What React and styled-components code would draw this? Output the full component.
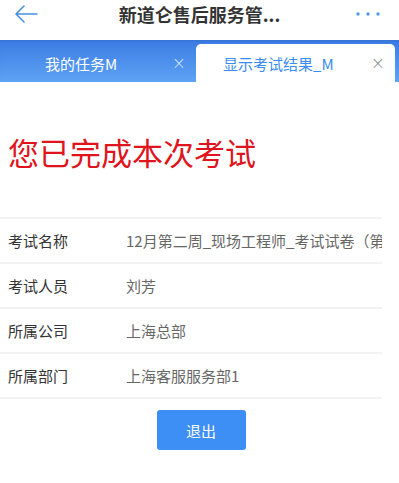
import React from "react";
import styled, { createGlobalStyle } from "styled-components";

const Global = createGlobalStyle`
  html, body { margin: 0; padding: 0; background: #fff; }
  body { font-family: "Noto Sans CJK SC", "Noto Sans", sans-serif; }
  * { box-sizing: border-box; }
`;

const Page = styled.div`
  width: 399px;
  height: 483px;
  overflow: hidden;
  background: #fff;
`;

const Header = styled.div`
  height: 40px;
  display: flex;
  align-items: center;
  justify-content: space-between;
  padding: 0 18px 0 14px;
  position: relative;
`;

const Title = styled.div`
  position: absolute;
  left: 0;
  right: 0;
  top: 0;
  line-height: 28px;
  text-align: center;
  font-size: 18px;
  font-weight: 700;
  color: #333;
  pointer-events: none;
`;

const IconBtn = styled.div`
  display: flex;
  align-items: center;
  height: 28px;
  margin-top: -12px;
`;

const TabBar = styled.div`
  height: 42px;
  display: flex;
  align-items: flex-end;
  padding: 0 4px 0 0;
  background: linear-gradient(#3b7be3, #5ea3f4);
  box-shadow: inset 0 2px 1px rgba(0,0,0,0.05);
`;

const Tab = styled.div`
  flex: 0 0 ${p => p.$w}px;
  height: ${p => (p.$active ? 38 : 42)}px;
  display: flex;
  align-items: center;
  justify-content: space-between;
  padding: 0 ${p => (p.$active ? 10 : 10)}px 0 ${p => (p.$active ? 27 : 45)}px;
  background: ${p => (p.$active ? "#fff" : "transparent")};
  border-radius: ${p => (p.$active ? "5px 5px 0 0" : "0")};
  color: ${p => (p.$active ? "#3a8cf0" : "#fff")};
  font-size: 15px;
  padding-top: ${p => (p.$active ? 0 : 4)}px;
`;

const Close = styled.span`
  font-size: 17px;
  font-family: "DejaVu Sans", sans-serif;
  font-weight: 300;
  color: ${p => (p.$active ? "#8a8a8a" : "rgba(255,255,255,0.75)")};
  line-height: 1;
`;

const Content = styled.div`
  width: 382px;
  overflow: hidden;
`;

const Heading = styled.h1`
  margin: 0;
  padding: 50px 0 0 8px;
  height: 135px;
  font-size: 31px;
  font-weight: 400;
  color: #e0141c;
  line-height: 40px;
`;

const Table = styled.div`
  border-top: 2px solid #f3f3f3;
`;

const Row = styled.div`
  height: 45px;
  display: flex;
  align-items: center;
  border-bottom: 2px solid #f3f3f3;
  font-size: 15px;
  white-space: nowrap;
`;

const Label = styled.div`
  flex: 0 0 126px;
  padding-left: 8px;
  color: #333;
`;

const Value = styled.div`
  flex: 1;
  overflow: hidden;
  color: #666;
`;

const Actions = styled.div`
  display: flex;
  justify-content: center;
  padding: 11px 0 0 0;
  width: 399px;
`;

const Button = styled.button`
  width: 89px;
  height: 40px;
  border: none;
  border-radius: 3px;
  background: #3d8ef5;
  color: #fff;
  font-size: 15px;
  font-family: inherit;
  margin-left: 3px;
`;

const rows = [
  ["考试名称", "12月第二周_现场工程师_考试试卷（第二周）"],
  ["考试人员", "刘芳"],
  ["所属公司", "上海总部"],
  ["所属部门", "上海客服服务部1"],
];

export default function App() {
  return (
    <Page>
      <Global />
      <Header>
        <IconBtn>
          <svg width="24" height="20" viewBox="0 0 24 20">
            <path d="M23 10H2M10 2L2 10L10 18" fill="none" stroke="#4a90e2" strokeWidth="1.6" strokeLinecap="round" strokeLinejoin="round" />
          </svg>
        </IconBtn>
        <Title>新道仑售后服务管...</Title>
        <IconBtn>
          <svg width="26" height="6" viewBox="0 0 26 6">
            <circle cx="3" cy="3" r="1.7" fill="#4f9be8" />
            <circle cx="13" cy="3" r="1.7" fill="#4f9be8" />
            <circle cx="23" cy="3" r="1.7" fill="#4f9be8" />
          </svg>
        </IconBtn>
      </Header>
      <TabBar>
        <Tab $w={196}>
          <span>我的任务M</span>
          <Close>×</Close>
        </Tab>
        <Tab $w={199} $active>
          <span>显示考试结果_M</span>
          <Close $active>×</Close>
        </Tab>
      </TabBar>
      <Content>
        <Heading>您已完成本次考试</Heading>
        <Table>
          {rows.map(([k, v]) => (
            <Row key={k}>
              <Label>{k}</Label>
              <Value>{v}</Value>
            </Row>
          ))}
        </Table>
      </Content>
      <Actions>
        <Button>退出</Button>
      </Actions>
    </Page>
  );
}
